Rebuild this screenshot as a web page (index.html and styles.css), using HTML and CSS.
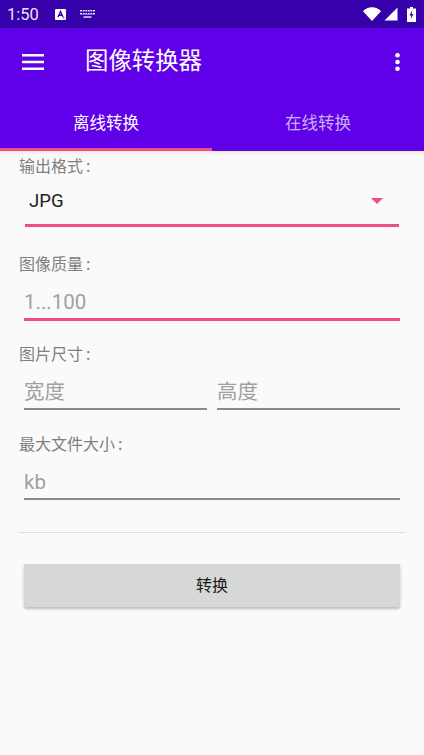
FILE: index.html
```html
<!DOCTYPE html>
<html lang="zh">
<head>
<meta charset="utf-8">
<title>图像转换器</title>
<link rel="stylesheet" href="styles.css">
</head>
<body>
<div class="status">
  <span class="time">1:50</span>
  <svg class="st-a" width="11" height="11" viewBox="0 0 11 11"><rect width="11" height="11" rx="1" fill="#fff"/><path d="M3 8 5.500 2.500 8 8M3.900 6.200H7.100" fill="none" stroke="#3700b3" stroke-width="1.400"/><path d="M8 9h1.500" stroke="#3700b3"/></svg>
  <svg class="st-k" width="15" height="8" viewBox="0 0 15 8"><g fill="#e6dff7"><path d="M0 0h15v1.500H0z"/><path d="M0 3h15v1.500H0z"/><path d="M3.500 6.300h8v1.500h-8z"/></g><path d="M2.500 0v4.500M5 0v4.500M7.500 0v4.500M10 0v4.500M12.500 0v4.500" stroke="#3700b3" stroke-width=".7"/></svg>
  <span class="spacer"></span>
  <svg class="st-w" width="18" height="14" viewBox="0 0 18 14"><path d="M0 4.300C2.400 1.700 5.500.300 9 .300s6.600 1.400 9 4L9 14z" fill="#fff"/></svg>
  <svg class="st-s" width="14" height="14" viewBox="0 0 14 14"><path d="M13.500 .500V13.500H.500z" fill="#fff"/></svg>
  <svg class="st-b" width="9" height="15" viewBox="0 0 9 15"><path d="M3 0h3v1.500h3V15H0V1.500h3z" fill="#fff"/><path d="M5.300 3 2.500 8.500h1.800L3.700 12.500 6.500 7H4.700z" fill="#3700b3"/></svg>
</div>
<header class="appbar">
  <div class="toolbar">
    <svg class="menu" width="22" height="16" viewBox="0 0 22 16"><path d="M0 0h22v2.500H0zM0 6.800h22v2.500H0zM0 13.500h22V16H0z" fill="#fff"/></svg>
    <h1 class="title">图像转换器</h1>
    <svg class="more" width="5" height="18" viewBox="0 0 5 18"><circle cx="2.500" cy="2.300" r="2.300" fill="#fff"/><circle cx="2.500" cy="9" r="2.300" fill="#fff"/><circle cx="2.500" cy="15.700" r="2.300" fill="#fff"/></svg>
  </div>
  <nav class="tabs">
    <div class="tab active">离线转换</div>
    <div class="tab">在线转换</div>
  </nav>
</header>
<main class="form">
  <label class="lbl lbl-first">输出格式<span class="colon">:</span></label>
  <div class="select">
    <span>JPG</span>
    <i class="caret"></i>
  </div>
  <label class="lbl lbl-q">图像质量<span class="colon">:</span></label>
  <div class="field focus">1...100</div>
  <label class="lbl lbl-s">图片尺寸<span class="colon">:</span></label>
  <div class="pair">
    <div class="field">宽度</div>
    <div class="field">高度</div>
  </div>
  <label class="lbl lbl-m">最大文件大小<span class="colon">:</span></label>
  <div class="field">kb</div>
  <hr class="divider">
  <button class="convert">转换</button>
</main>
</body>
</html>
```
FILE: styles.css
```css
* { box-sizing: border-box; }
html, body { margin: 0; padding: 0; }
body {
  width: 424px;
  height: 755px;
  overflow: hidden;
  background: #fafafa;
  font-family: Roboto, "Noto Sans CJK SC", sans-serif;
}
.status {
  height: 28px;
  background: #3600ab;
  color: #fff;
  display: flex;
  align-items: center;
  padding: 0 8px 0 7px;
}
.time { font-size: 16.500px; width: 48px; color: #e9e3f7; }
.st-a { margin-right: 14px; }
.spacer { flex: 1; }
.st-w { margin-right: 3px; }
.st-s { margin-right: 9px; }
.appbar { background: #6000e8; height: 123px; display: flex; flex-direction: column; box-shadow: 0 1px 4px rgba(0,0,0,.12); }
.toolbar {
  height: 67px;
  display: flex;
  align-items: center;
  padding: 0 24px 0 22px;
}
.title {
  margin: 0 0 6px 41px;
  font-size: 23.400px;
  font-weight: 400;
  color: #fff;
  flex: 1;
}
.tabs { flex: 1; display: flex; }
.tab {
  flex: 1;
  display: flex;
  align-items: center;
  justify-content: center;
  font-size: 16.500px;
  color: rgba(255,255,255,.7);
  padding-bottom: 2px;
  border-bottom: 1px solid #5a0cc8;
}
.tab.active { color: #fff; border-bottom: 3px solid #ee4d85; padding-bottom: 0; }
.form { padding: 0 19px; display: flex; flex-direction: column; }
.lbl {
  font-family: "Noto Sans CJK SC", sans-serif;
  font-size: 16px;
  line-height: 18px;
  padding-bottom: 4px;
  color: #808080;
  display: block;
}
.colon { margin-left: 3px; }
.lbl-first { margin-top: 5px; }
.select {
  margin: 0 6px;
  height: 49px;
  border-bottom: 3px solid #ee4d85;
  display: flex;
  align-items: center;
  justify-content: space-between;
  padding: 0 16px 0 4px;
  font-size: 18.500px;
  color: #212121;
}
.caret { width: 0; height: 0; border-left: 6px solid transparent; border-right: 6px solid transparent; border-top: 6px solid #ee4d85; }
.field {
  margin: 0 5px;
  height: 44px;
  border-bottom: 2px solid #8a8a8a;
  font-size: 20.500px;
  line-height: 28px;
  padding-top: 12px;
  color: #a0a0a0;
}
.pair .field { flex: 1; }
.field.focus { height: 45px; border-bottom: 3px solid #ee4d85; }
.lbl-q { margin-top: 27px; }
.lbl-s { margin-top: 23px; }
.lbl-m { margin-top: 24px; }
.pair { display: flex; }
.divider { border: 0; height: 1px; background: #dedede; margin: 32px 0 0; width: 386px; }
.convert {
  margin: 31px 5px 0;
  height: 43px;
  border: 0;
  border-radius: 2px;
  padding: 0 0 3px;
  background: #d6d7d7;
  color: #1a1a1a;
  font: 16px Roboto, "Noto Sans CJK SC", sans-serif;
  box-shadow: 0 2px 3px rgba(0,0,0,.25);
}
```
